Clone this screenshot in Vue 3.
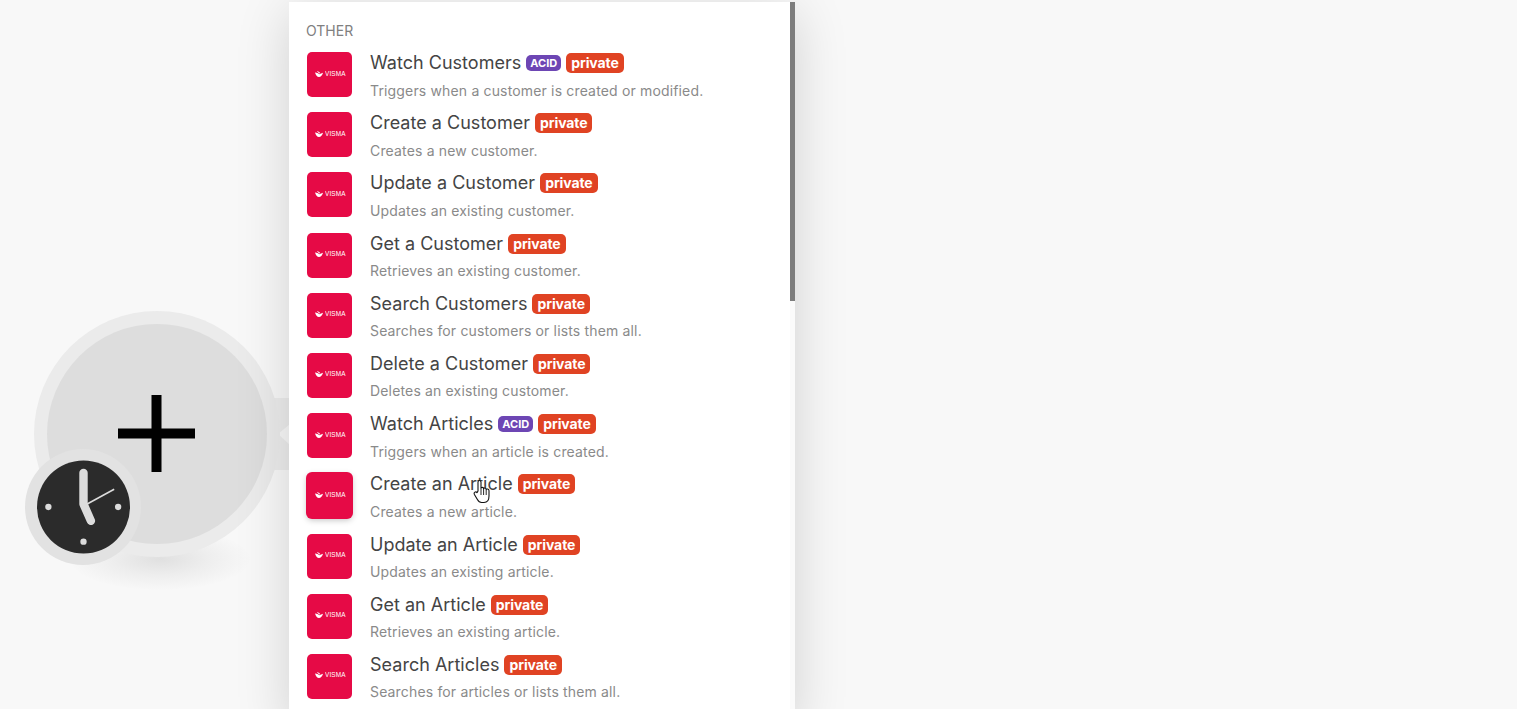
<script setup>
const modules = [
  { name: 'Watch Customers', desc: 'Triggers when a customer is created or modified.', acid: true },
  { name: 'Create a Customer', desc: 'Creates a new customer.' },
  { name: 'Update a Customer', desc: 'Updates an existing customer.' },
  { name: 'Get a Customer', desc: 'Retrieves an existing customer.' },
  { name: 'Search Customers', desc: 'Searches for customers or lists them all.' },
  { name: 'Delete a Customer', desc: 'Deletes an existing customer.' },
  { name: 'Watch Articles', desc: 'Triggers when an article is created.', acid: true },
  { name: 'Create an Article', desc: 'Creates a new article.', hover: true },
  { name: 'Update an Article', desc: 'Updates an existing article.' },
  { name: 'Get an Article', desc: 'Retrieves an existing article.' },
  { name: 'Search Articles', desc: 'Searches for articles or lists them all.' },
]
</script>

<template>
  <div class="canvas">
    <div class="node-shadow"></div>
    <svg class="node-tab" width="24" height="72" viewBox="0 0 24 72">
      <path d="M0 0H24V26L12 36 24 47V72H0z" fill="#ececec" />
    </svg>
    <div class="node">
      <div class="node-inner">
        <svg class="plus" width="77" height="77" viewBox="0 0 77 77">
          <path d="M33.5 0h10v33.5H77v10H43.5V77h-10V43.5H0v-10h33.5z" fill="#000" />
        </svg>
      </div>
    </div>
    <div class="clock-ring">
      <svg class="clock" width="93" height="94" viewBox="0 0 94 94">
        <circle cx="47" cy="47" r="47" fill="#2b2b2b" />
        <circle cx="11.5" cy="47" r="3.2" fill="#dcdcdc" />
        <circle cx="82" cy="47" r="3.2" fill="#dcdcdc" />
        <circle cx="47" cy="82" r="3.2" fill="#dcdcdc" />
        <path d="M47 46L78 29" stroke="#dcdcdc" stroke-width="1.6" fill="none" />
        <path d="M47 12.5V44L54.5 61" stroke="#dcdcdc" stroke-width="8.5" stroke-linecap="round" stroke-linejoin="round" fill="none" />
      </svg>
    </div>

    <div class="panel">
      <div class="track"><div class="thumb"></div></div>
      <div class="group">OTHER</div>
      <ul class="list">
        <li v-for="m in modules" :key="m.name" class="row">
          <div class="logo" :class="{ hover: m.hover }">
            <svg width="8" height="6" viewBox="0 0 8 6">
              <path d="M0 1.4C2 1.4 3.2 2.2 4.2 3.2L8 1.8C7.4 4.2 5.8 6 4 6 2.2 6 .7 4 0 1.4zM1.8 0C3.2.1 4.4 1 5.2 2L4.2 2.6C3.4 1.6 2.6.7 1.8 0z" fill="#fff" />
            </svg>
            <span>VISMA</span>
          </div>
          <div class="text">
            <div class="title">
              <span class="name">{{ m.name }}</span>
              <span v-if="m.acid" class="acid">ACID</span>
              <span class="private">private</span>
            </div>
            <div class="desc">{{ m.desc }}</div>
          </div>
        </li>
      </ul>
    </div>

    <svg class="cursor" width="18" height="25" viewBox="0 0 18 25">
      <path d="M5 12V3.2C5 1 8 1 8 3.2V9.5C8 8 10.6 8 10.6 9.8 10.8 8.6 13.2 8.8 13.2 10.6 13.6 9.6 16 9.8 16 11.8V17C16 20.5 14.4 23.5 11 23.5H8.6C6.6 23.5 5.4 22.4 4.4 20.6L1.4 15.4C.4 13.4 2.8 12 4 13.6z" fill="#fff" stroke="#111" stroke-width="1.1" stroke-linejoin="round" />
      <path d="M8 10v6M10.6 10v6M13.2 10.8V16" stroke="#111" stroke-width=".9" fill="none" />
    </svg>
  </div>
</template>

<style>
html, body {
  margin: 0;
  overflow: hidden;
  background: #f8f8f8;
}
</style>

<style scoped>
.canvas {
  position: relative;
  width: 1517px;
  height: 709px;
  overflow: hidden;
  background: #f8f8f8;
  font-family: Inter, "Liberation Sans", sans-serif;
}

.node {
  position: absolute;
  left: 34px;
  top: 311px;
  width: 246px;
  height: 246px;
  border-radius: 50%;
  background: #ebebeb;
  display: flex;
  align-items: center;
  justify-content: center;
}

.node-inner {
  width: 220px;
  height: 220px;
  border-radius: 50%;
  background: #dddddd;
  display: flex;
  align-items: center;
  justify-content: center;
}

.plus {
  display: block;
  margin-left: -1px;
  margin-top: -1px;
}

.node-shadow {
  position: absolute;
  left: 70px;
  top: 528px;
  width: 180px;
  height: 62px;
  border-radius: 50%;
  background: radial-gradient(ellipse at center, #e0e0e0 0%, #eeeeee 38%, rgba(248, 248, 248, 0) 72%);
}

.node-tab {
  position: absolute;
  left: 266px;
  top: 398px;
}

.clock-ring {
  position: absolute;
  left: 25px;
  top: 449px;
  width: 116px;
  height: 116px;
  border-radius: 50%;
  background: #e2e2e2;
  display: flex;
  align-items: center;
  justify-content: center;
}

.clock {
  display: block;
}

.panel {
  position: absolute;
  left: 289px;
  top: 2px;
  width: 506px;
  height: 720px;
  box-sizing: border-box;
  padding: 20px 18px 0;
  background: #fff;
  box-shadow: 0 10px 50px rgba(0, 0, 0, 0.16);
}

.track {
  position: absolute;
  right: 0;
  top: 0;
  bottom: 0;
  width: 5px;
  background: #fbfbfb;
}

.thumb {
  height: 299px;
  background: #7d7d7d;
}

.group {
  font-size: 14px;
  line-height: 17px;
  color: #808080;
  margin-bottom: 13px;
  margin-left: -1px;
}

.list {
  list-style: none;
  margin: 0;
  padding: 0;
}

.row {
  display: flex;
  height: 60.2px;
}

.logo {
  flex: none;
  width: 45px;
  height: 45px;
  box-sizing: border-box;
  padding-bottom: 2px;
  border-radius: 5px;
  background: #e60a46;
  display: flex;
  align-items: center;
  justify-content: center;
  gap: 2px;
  color: #fff;
}

.logo span {
  display: block;
  width: 20px;
  font-family: "Liberation Sans", sans-serif;
  font-size: 8px;
  line-height: 8px;
  letter-spacing: 0.2px;
  transform: scaleX(0.8);
  transform-origin: left center;
  white-space: nowrap;
}

.logo.hover {
  box-shadow: 0 0 0 1px #e60a46, 0 2px 6px rgba(0, 0, 0, 0.25);
}

.text {
  margin-left: 18px;
}

.title {
  display: flex;
  align-items: center;
  height: 22px;
}

.name {
  font-size: 18px;
  line-height: 22px;
  letter-spacing: 0.02px;
  color: #444;
}

.acid {
  margin-left: 5px;
  padding: 0 4px;
  height: 16px;
  line-height: 16px;
  border-radius: 5px;
  background: #6d46b4;
  color: #fff;
  font-size: 11px;
  font-weight: 700;
}

.private {
  margin-left: 5px;
  padding: 0 5px;
  height: 20px;
  line-height: 19px;
  border-radius: 5px;
  background: #e04323;
  color: #fff;
  font-size: 14px;
  font-weight: 700;
  letter-spacing: -0.1px;
}

.desc {
  margin-top: 7.5px;
  font-size: 14px;
  line-height: 17px;
  letter-spacing: 0.16px;
  color: #8a8a8a;
}

.cursor {
  position: absolute;
  left: 473px;
  top: 479px;
}
</style>
